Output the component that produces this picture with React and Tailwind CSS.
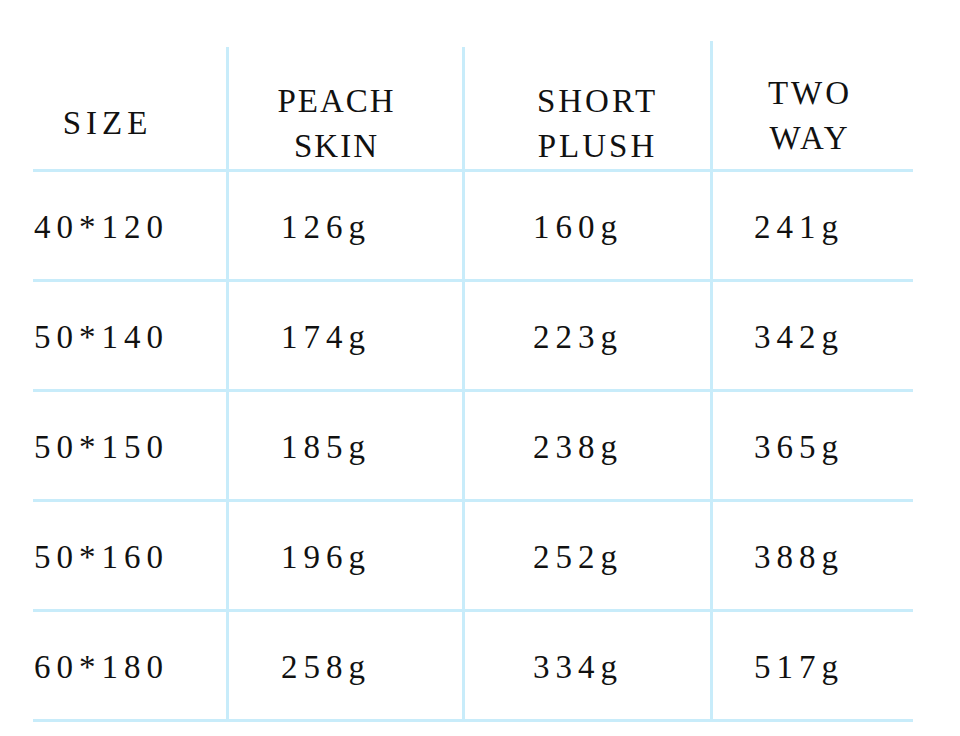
const rows = [
  ['40*120', '126g', '160g', '241g'],
  ['50*140', '174g', '223g', '342g'],
  ['50*150', '185g', '238g', '365g'],
  ['50*160', '196g', '252g', '388g'],
  ['60*180', '258g', '334g', '517g'],
]

const line = 'border-[#c8ecfa]'

export default function App() {
  return (
    <div className="w-[960px] h-[736px] bg-white text-[#111] overflow-hidden font-['Liberation_Serif','Times_New_Roman',serif]">
      <div className="ml-[33px] mt-[47px] w-[880px]">
        {/* header */}
        <div className={`grid grid-cols-[193px_236px_248px_203px] h-[125px] border-b-[3px] ${line}`}>
          <div className="flex items-center justify-center pr-[44px] pt-[30px]">
            <span className="text-[33px] tracking-[5px] leading-none">SIZE</span>
          </div>
          <div className={`flex flex-col items-center justify-center border-l-[3px] ${line} pr-[18px] pt-[32px]`}>
            <span className="text-[33px] tracking-[2px] leading-[45px]">PEACH</span>
            <span className="text-[33px] tracking-[2px] leading-[45px]">SKIN</span>
          </div>
          <div className={`flex flex-col items-center justify-center border-l-[3px] ${line} pl-[20px] pt-[32px]`}>
            <span className="text-[33px] tracking-[3px] leading-[45px]">SHORT</span>
            <span className="text-[33px] tracking-[3px] leading-[45px]">PLUSH</span>
          </div>
          <div className={`flex flex-col items-center justify-center -mt-[6px] border-l-[3px] ${line} pt-[22px] pr-[6px]`}>
            <span className="text-[33px] tracking-[3px] leading-[45px]">TWO</span>
            <span className="text-[33px] tracking-[3px] leading-[45px]">WAY</span>
          </div>
        </div>

        {/* rows */}
        {rows.map((r) => (
          <div
            key={r[0]}
            className={`grid grid-cols-[193px_236px_248px_203px] h-[110px] border-b-[3px] ${line}`}
          >
            <div className="flex items-center pl-[1px] pt-[4px]">
              <span className="text-[33px] tracking-[6px] leading-none">{r[0]}</span>
            </div>
            <div className={`flex items-center border-l-[3px] ${line} pl-[52px] pt-[4px]`}>
              <span className="text-[33px] tracking-[6px] leading-none">{r[1]}</span>
            </div>
            <div className={`flex items-center border-l-[3px] ${line} pl-[68px] pt-[4px]`}>
              <span className="text-[33px] tracking-[6px] leading-none">{r[2]}</span>
            </div>
            <div className={`flex items-center border-l-[3px] ${line} pl-[41px] pt-[4px]`}>
              <span className="text-[33px] tracking-[6px] leading-none">{r[3]}</span>
            </div>
          </div>
        ))}
      </div>
    </div>
  )
}
